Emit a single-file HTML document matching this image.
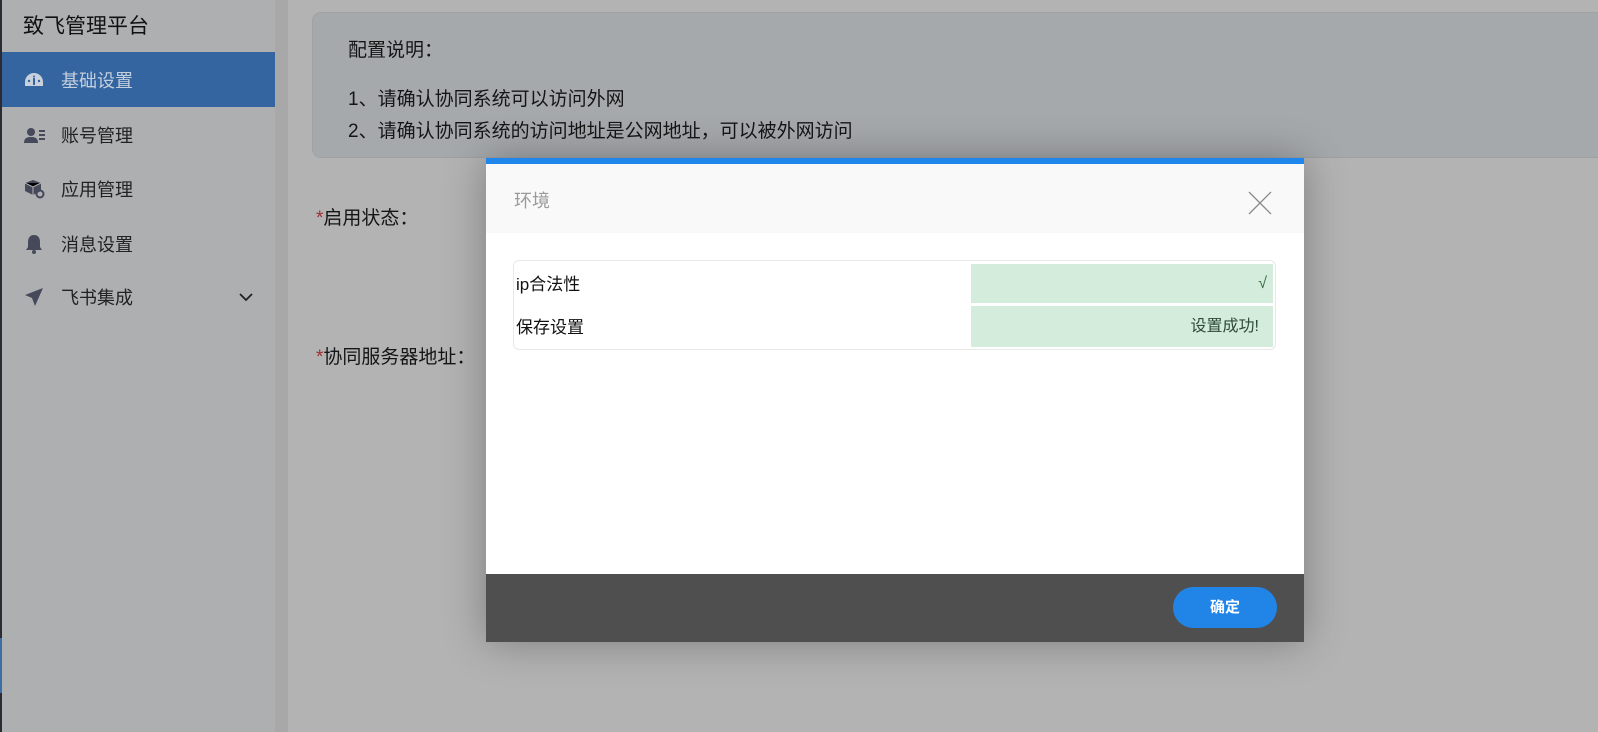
<!DOCTYPE html>
<html><head><meta charset="utf-8"><style>
*{margin:0;padding:0;box-sizing:border-box}
body{width:1598px;height:732px;overflow:hidden;background:#b3b3b3;position:relative;font-family:"Liberation Sans","Noto Sans CJK SC",sans-serif;color:#1a1a1a}
.abs{position:absolute}
.side{left:0;top:0;width:275px;height:732px;background:#aeafb1;border-left:2px solid #2a2b33}
.strip{left:275px;top:0;width:13px;height:732px;background:#a8a8a8}
.title{left:23px;top:10px;font-size:21px;color:#111}
.item{left:2px;width:273px;height:55px;font-size:18px;color:#222}
.item span{position:absolute;left:59px;top:50%;transform:translateY(-50%)}
.item svg{position:absolute;left:22px;top:50%;transform:translateY(-50%)}
.info{left:312px;top:12px;width:1300px;height:146px;background:#a6a9ac;border-radius:9px;border:1px solid #9fa2a5}
.t{font-size:19px;color:#151515;white-space:nowrap}
.modal{left:486px;top:158px;width:818px;height:484px;background:#fff;box-shadow:0 0 40px rgba(0,0,0,.3)}
.g{background:#d4ecdc;text-align:right;padding-right:14px;font-size:16px}
</style></head><body>
<div class="abs side"></div>
<div class="abs" style="left:0;top:638px;width:2px;height:55px;background:#3d6ea8"></div>
<div class="abs strip"></div>
<div class="abs title">致飞管理平台</div>
<div class="abs item" style="top:52px;background:#3465a0;color:#c4cfdc"><svg width="20" height="16" viewBox="0 0 20 16"><path d="M10 1A9 9 0 0 0 1 10v4h18v-4A9 9 0 0 0 10 1z" fill="#c9d1dc"/><path d="M10 6v7" stroke="#3465a0" stroke-width="2"/><circle cx="5" cy="9" r="1.2" fill="#3465a0"/><circle cx="15" cy="9" r="1.2" fill="#3465a0"/><circle cx="10" cy="4.5" r="1" fill="#3465a0"/></svg><span>基础设置</span></div>
<div class="abs item" style="top:107px"><svg width="22" height="16" viewBox="0 0 22 16"><circle cx="7" cy="5" r="4" fill="#45495a"/><path d="M0 16c0-5 3-6 7-6s7 1 7 6z" fill="#45495a"/><path d="M15 4h6M15 8h6M15 12h6" stroke="#45495a" stroke-width="2"/></svg><span>账号管理</span></div>
<div class="abs item" style="top:161px"><svg width="22" height="20" viewBox="0 0 22 20"><path d="M9 1l8 3v8l-8 4-8-4V4z" fill="#45495a"/><path d="M1 4l8 4 8-4M9 8v8" stroke="#aeafb1" stroke-width="1"/><circle cx="16" cy="15" r="3.5" fill="none" stroke="#45495a" stroke-width="2"/></svg><span>应用管理</span></div>
<div class="abs item" style="top:216px"><svg width="20" height="20" viewBox="0 0 20 20"><path d="M10 1c-4 0-6 3-6 7v5l-2 3h16l-2-3V8c0-4-2-7-6-7z" fill="#45495a"/><circle cx="10" cy="18" r="2" fill="#45495a"/></svg><span>消息设置</span></div>
<div class="abs item" style="top:269px"><svg width="20" height="20" viewBox="0 0 20 20"><path d="M19 1L1 8l7 3 3 8z" fill="#45495a"/></svg><span>飞书集成</span><svg style="left:236px" width="16" height="10" viewBox="0 0 16 10"><path d="M2 2l6 6 6-6" fill="none" stroke="#222" stroke-width="1.8"/></svg></div>
<div class="abs info"></div>
<div class="abs t" style="left:348px;top:35px">配置说明：</div>
<div class="abs t" style="left:348px;top:84px">1、请确认协同系统可以访问外网</div>
<div class="abs t" style="left:348px;top:116px">2、请确认协同系统的访问地址是公网地址，可以被外网访问</div>
<div class="abs t" style="left:316px;top:203px"><span style="color:#a03030">*</span>启用状态：</div>
<div class="abs t" style="left:316px;top:342px"><span style="color:#a03030">*</span>协同服务器地址：</div>
<div class="abs modal">
 <div class="abs" style="left:0;top:0;width:818px;height:6px;background:#1f87eb"></div>
 <div class="abs" style="left:0;top:6px;width:818px;height:69px;background:#f9f9f9"></div>
 <div class="abs" style="left:28px;top:29px;font-size:18px;color:#9a9a9a">环境</div>
 <svg class="abs" style="left:762px;top:33px" width="24" height="24" viewBox="0 0 24 24"><path d="M1 1l22 22M23 1L1 23" stroke="#8a8a8a" stroke-width="1.3"/></svg>
 <div class="abs" style="left:27px;top:102px;width:763px;height:90px;border:1px solid #e8e8e8;border-radius:6px"></div>
 <div class="abs g" style="left:485px;top:106px;width:302px;height:39px;line-height:39px;color:#3a6a45;padding-right:6px">√</div>
 <div class="abs g" style="left:485px;top:148px;width:302px;height:41px;line-height:41px;color:#2d4a37">设置成功!</div>
 <div class="abs" style="left:30px;top:112px;font-size:17px;color:#111">ip合法性</div>
 <div class="abs" style="left:30px;top:155px;font-size:17px;color:#111">保存设置</div>
 <div class="abs" style="left:0;top:416px;width:818px;height:68px;background:#4f4f4f"></div>
 <div class="abs" style="left:687px;top:429px;width:104px;height:41px;background:#2185e8;border-radius:21px;color:#fff;font-size:15px;font-weight:bold;text-align:center;line-height:41px">确定</div>
</div>
</body></html>
